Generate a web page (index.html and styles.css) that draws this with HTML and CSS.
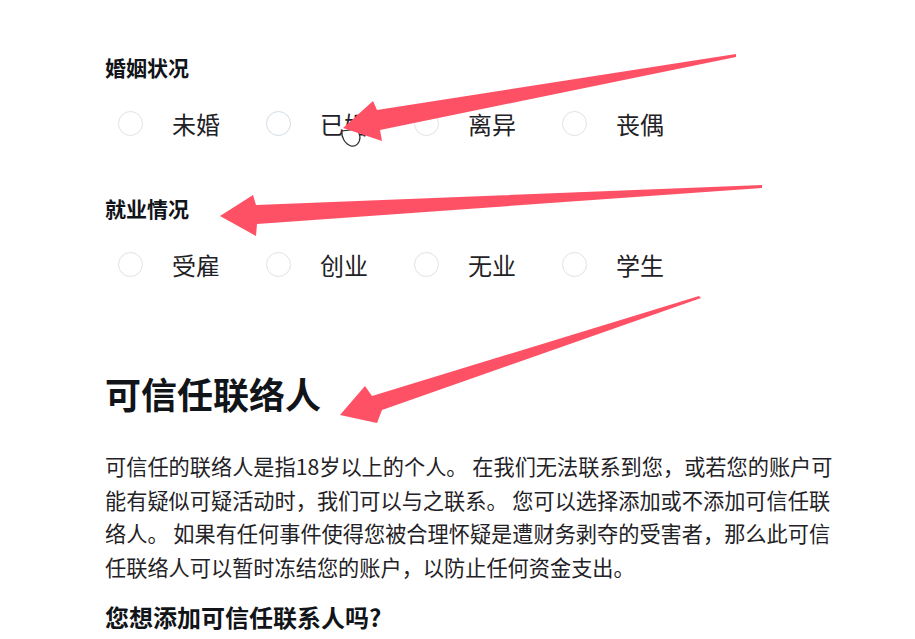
FILE: index.html
```html
<!DOCTYPE html>
<html lang="zh-CN">
<head>
    <meta charset="UTF-8">
    <meta name="viewport" content="width=device-width, initial-scale=1.0">
    <title>可信任联络人</title>
    <link rel="stylesheet" href="styles.css">
</head>
<body>
    <div class="container">
        <div class="field">
            <div class="field-label">婚姻状况</div>
            <div class="radio-row">
                <label class="radio-option"><span class="radio"></span>未婚</label>
                <label class="radio-option"><span class="radio radio-blue"></span>已婚</label>
                <label class="radio-option"><span class="radio"></span>离异</label>
                <label class="radio-option"><span class="radio"></span>丧偶</label>
            </div>
        </div>

        <div class="field field-second">
            <div class="field-label">就业情况</div>
            <div class="radio-row">
                <label class="radio-option"><span class="radio"></span>受雇</label>
                <label class="radio-option"><span class="radio"></span>创业</label>
                <label class="radio-option"><span class="radio"></span>无业</label>
                <label class="radio-option"><span class="radio"></span>学生</label>
            </div>
        </div>

        <h2 class="section-title">可信任联络人</h2>
        <p class="section-text">可信任的联络人是指18岁以上的个人。 在我们无法联系到您，或若您的账户可能有疑似可疑活动时，我们可以与之联系。 您可以选择添加或不添加可信任联络人。 如果有任何事件使得您被合理怀疑是遭财务剥夺的受害者，那么此可信任联络人可以暂时冻结您的账户，以防止任何资金支出。</p>
        <h3 class="question">您想添加可信任联系人吗?</h3>
    </div>

    <!-- annotation layer -->
    <svg class="annotations" width="915" height="639" viewBox="0 0 915 639">
        <path class="cursor" d="M342 131 C341 137 345 144 351 146 C356 147 360 143 360 137 L358 129 Z"/>
        <polygon class="arrow" points="343,128 373,101 377,110 736,54 736,57 380,130 382,141"/>
        <polygon class="arrow" points="220,216 253,195 256,205 762,185 762,188 257,224 256,236"/>
        <polygon class="arrow" points="340,415 365,386 372,396 699,296 701,298 382,410 377,423"/>
    </svg>
</body>
</html>
```

FILE: styles.css
```css
:root {
    --text-color: #1f2226;
    --title-color: #111418;
    --radio-border: #e1e2e4;
    --arrow-color: #ff5166;
}

body {
    margin: 0;
    background: #ffffff;
    color: var(--text-color);
    font-family: "Noto Sans CJK SC", "Noto Sans", sans-serif;
    position: relative;
    min-height: 639px;
    overflow: hidden;
}

.container {
    padding: 53px 0 0 105px;
}

.field-label {
    font-size: 21px;
    line-height: 28px;
    font-weight: 700;
    color: var(--title-color);
}

.radio-row {
    display: flex;
    margin-top: 22px;
    height: 40px;
    align-items: center;
}

.radio-option {
    width: 148px;
    display: flex;
    align-items: center;
    font-size: 24px;
    padding-left: 13px;
    box-sizing: border-box;
}

.radio {
    width: 23px;
    height: 23px;
    border: 1.5px solid var(--radio-border);
    border-radius: 50%;
    margin-right: 29px;
    flex-shrink: 0;
}

.radio-blue {
    border-color: #d3dbe5;
}

.field-second {
    margin-top: 51px;
}

.section-title {
    margin: 85px 0 0;
    font-size: 36px;
    line-height: 48px;
    font-weight: 700;
    color: var(--title-color);
}

.section-text {
    margin: 32px 0 0;
    width: 735px;
    font-size: 21.2px;
    line-height: 33.5px;
    color: var(--text-color);
}

.question {
    margin: 18px 0 0;
    font-size: 24px;
    line-height: 32px;
    font-weight: 700;
    color: var(--title-color);
}

.annotations {
    position: absolute;
    top: 0;
    left: 0;
    pointer-events: none;
}

.arrow {
    fill: var(--arrow-color);
}

.cursor {
    fill: #ffffff;
    stroke: #2a2a2a;
    stroke-width: 1.2;
}
```
